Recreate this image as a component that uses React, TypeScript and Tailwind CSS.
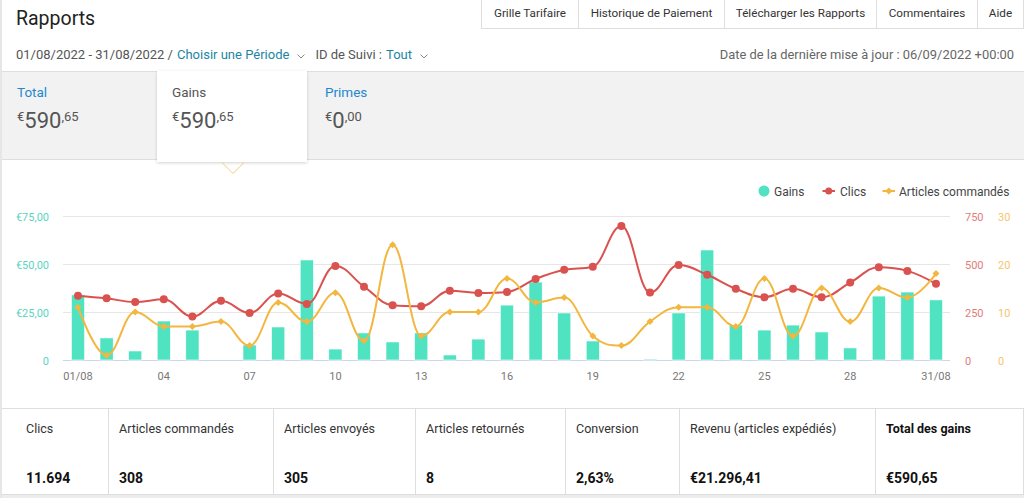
import React from 'react'

const X0 = 78
const STEP = 28.6
const BASE = 360

// per-day values, 1..31
const gains = [33.9, 11.5, 4.7, 20.3, 15.6, 0, 7.8, 17.2, 52.1, 5.7, 14.1, 9.4, 14.1, 2.6, 10.9, 28.6, 40.6, 24.5, 9.9, 0, 0.5, 24.5, 57.3, 18.2, 15.6, 18.2, 14.6, 6.3, 33.3, 35.4, 31.3]
const clics = [335, 321, 302, 316, 226, 309, 245, 347, 292, 490, 382, 285, 280, 361, 349, 354, 422, 470, 486, 698, 351, 495, 444, 371, 327, 371, 327, 403, 483, 464, 397]
const articles = [11, 1, 10, 7, 7, 8, 3, 12, 8, 14, 4, 24, 5, 10, 10, 17, 12, 13, 5, 3, 8, 11, 11, 7, 17, 5, 15, 8, 15, 13, 18]

const BAR = '#50e3c2'
const RED = '#d9524f'
const YEL = '#f3b63f'

type P = { x: number; y: number }

// highcharts-style spline
function spline(pts: P[]) {
  const s = 1.5
  const d = 2.5
  const ctl = pts.map((p, i) => {
    const prev = pts[i - 1]
    const next = pts[i + 1]
    if (!prev || !next) return null
    let lx = (s * p.x + prev.x) / d
    let ly = (s * p.y + prev.y) / d
    const rx = (s * p.x + next.x) / d
    let ry = (s * p.y + next.y) / d
    const corr = ((ry - ly) * (rx - p.x)) / (rx - lx) + p.y - ry
    ly += corr
    ry += corr
    if (ly > prev.y && ly > p.y) {
      ly = Math.max(prev.y, p.y)
      ry = 2 * p.y - ly
    } else if (ly < prev.y && ly < p.y) {
      ly = Math.min(prev.y, p.y)
      ry = 2 * p.y - ly
    }
    if (ry > next.y && ry > p.y) {
      ry = Math.max(next.y, p.y)
      ly = 2 * p.y - ry
    } else if (ry < next.y && ry < p.y) {
      ry = Math.min(next.y, p.y)
      ly = 2 * p.y - ry
    }
    return { lx, ly, rx, ry }
  })
  let out = `M${pts[0].x},${pts[0].y}`
  for (let i = 1; i < pts.length; i++) {
    const a = ctl[i - 1]
    const b = ctl[i]
    const q = pts[i - 1]
    const p = pts[i]
    out += ` C${a ? a.rx : q.x},${a ? a.ry : q.y} ${b ? b.lx : p.x},${b ? b.ly : p.y} ${p.x},${p.y}`
  }
  return out
}

const dx = (i: number) => X0 + i * STEP

function Chart() {
  const redPts = clics.map((v, i) => ({ x: dx(i), y: BASE - v * 0.192 }))
  const yelPts = articles.map((v, i) => ({ x: dx(i), y: BASE - v * 4.8 }))
  const grid = [216.5, 264.5, 312.5]
  const xLabels = ['01/08', '', '', '04', '', '', '07', '', '', '10', '', '', '13', '', '', '16', '', '', '19', '', '', '22', '', '', '25', '', '', '28', '', '', '31/08']
  return (
    <svg width={1022} height={245} viewBox="2 160 1022 245" className="block">
      {/* legend */}
      <g fontSize={12} fill="#444">
        <circle cx={764} cy={191} r={5.5} fill={BAR} />
        <text x={774} y={195.5}>Gains</text>
        <line x1={822.5} y1={191} x2={835} y2={191} stroke={RED} strokeWidth={2} />
        <circle cx={828.7} cy={191} r={3.5} fill={RED} />
        <text x={840} y={195.5}>Clics</text>
        <line x1={882.5} y1={191} x2={895} y2={191} stroke={YEL} strokeWidth={2} />
        <path d="M888.8,187.5 L892.3,191 L888.8,194.5 L885.3,191 Z" fill={YEL} />
        <text x={899} y={195.5}>Articles commandés</text>
      </g>

      {grid.map((y) => (
        <line key={y} x1={63} y1={y} x2={950} y2={y} stroke="#e6e6e6" strokeWidth={1} />
      ))}
      <line x1={63} y1={360.5} x2={950} y2={360.5} stroke="#ccd6eb" strokeWidth={1} />

      <g fontSize={11} fill="#5ad5bf" textAnchor="end">
        <text x={49} y={221}>€75,00</text>
        <text x={49} y={269}>€50,00</text>
        <text x={49} y={317}>€25,00</text>
        <text x={49} y={365}>0</text>
      </g>
      <g fontSize={11} fill="#e27b78">
        <text x={965} y={221}>750</text>
        <text x={965} y={269}>500</text>
        <text x={965} y={317}>250</text>
        <text x={965} y={365}>0</text>
      </g>
      <g fontSize={11} fill="#f5c56b">
        <text x={998} y={221}>30</text>
        <text x={998} y={269}>20</text>
        <text x={998} y={317}>10</text>
        <text x={998} y={365}>0</text>
      </g>
      <g fontSize={11} fill="#777" textAnchor="middle">
        {xLabels.map((l, i) => (l ? <text key={i} x={dx(i)} y={380}>{l}</text> : null))}
      </g>

      {gains.map((g, i) =>
        g > 0 ? (
          <rect key={i} x={dx(i) - 6.6} y={BASE - g * 1.92} width={13.2} height={g * 1.92} fill={BAR} stroke="#fff" strokeWidth={0.6} />
        ) : null,
      )}

      <path d={spline(redPts)} fill="none" stroke={RED} strokeWidth={2} />
      <path d={spline(yelPts)} fill="none" stroke={YEL} strokeWidth={2} />
      {redPts.map((p, i) => (
        <circle key={i} cx={p.x} cy={p.y} r={4} fill={RED} />
      ))}
      {yelPts.map((p, i) => (
        <path key={i} d={`M${p.x},${p.y - 3.5} L${p.x + 3.5},${p.y} L${p.x},${p.y + 3.5} L${p.x - 3.5},${p.y} Z`} fill={YEL} />
      ))}
    </svg>
  )
}

function Chevron() {
  return (
    <svg width="8" height="5" viewBox="0 0 8 5" className="mx-[8px] mt-[3px]">
      <path d="M0.5 0.5 L4 4 L7.5 0.5" fill="none" stroke="#888" strokeWidth="1" />
    </svg>
  )
}

function Amount({ whole, cents }: { whole: string; cents: string }) {
  return (
    <div className="mt-[6px] flex items-start text-[#555]">
      <span className="mt-[2px] text-[13px] leading-[14px]">€</span>
      <span className="text-[22px] leading-[26px]">{whole}</span>
      <span className="mt-[2px] text-[13px] leading-[14px]">,{cents}</span>
    </div>
  )
}

const tabs: [string, string][] = [
  ['Grille Tarifaire', 'w-[97px]'],
  ['Historique de Paiement', 'w-[146px]'],
  ['Télécharger les Rapports', 'w-[152px]'],
  ['Commentaires', 'w-[101px]'],
  ['Aide', 'w-[46px]'],
]

const stats: [string, string, string][] = [
  ['Clics', '11.694', 'w-[107px] pl-[24px]'],
  ['Articles commandés', '308', 'w-[165px] pl-[10px]'],
  ['Articles envoyés', '305', 'w-[142px] pl-[10px]'],
  ['Articles retournés', '8', 'w-[150px] pl-[10px]'],
  ['Conversion', '2,63%', 'w-[114px] pl-[10px]'],
  ['Revenu (articles expédiés)', '€21.296,41', 'w-[196px] pl-[10px]'],
]

export default function App() {
  return (
    <div className="h-[498px] w-[1024px] overflow-hidden border-l-2 border-[#e6e6e6] bg-white font-['Roboto',sans-serif]">
      <div className="flex h-[38px] items-start justify-between">
        <h1 className="pl-[14px] pt-[7px] text-[19.5px] leading-[24px] text-[#222]">Rapports</h1>
        <div className="flex h-[29px] border-b border-l border-[#dedede]">
          {tabs.map(([t, w]) => (
            <div key={t} className={`${w} flex items-center justify-center border-r border-[#dedede] text-[11.7px] text-[#333]`}>
              {t}
            </div>
          ))}
        </div>
      </div>

      <div className="flex h-[33px] items-center pl-[14px] pr-[10px] text-[13px] text-[#555]">
        <span>01/08/2022 - 31/08/2022 / </span>
        <span className="ml-[4px] text-[#1b86a4]">Choisir une Période</span>
        <Chevron />
        <span className="ml-[2px]">ID de Suivi :</span>
        <span className="ml-[4px] text-[#1b86a4]">Tout</span>
        <Chevron />
        <span className="ml-auto text-[12.9px] text-[#666]">Date de la dernière mise à jour : 06/09/2022 +00:00</span>
      </div>

      <div className="flex h-[89px] border-y border-[#dedede] bg-[#f2f2f2]">
        <div className="w-[155px] pl-[15px] pt-[10px]">
          <div className="text-[13.5px] leading-[20px] text-[#1f88d0]">Total</div>
          <Amount whole="590" cents="65" />
        </div>
        <div className="relative z-10 -mt-px h-[91px] w-[150px] bg-white pl-[15px] pt-[11px] shadow-[0_1px_3px_rgba(0,0,0,0.18)]">
          <div className="text-[13.5px] leading-[20px] text-[#555]">Gains</div>
          <Amount whole="590" cents="65" />
          <svg width="24" height="13" viewBox="0 0 24 13" className="absolute left-[64px] top-[91px]">
            <path d="M1 0.5 L12 11.5 L23 0.5" fill="none" stroke="#f6c97a" strokeWidth="1" />
          </svg>
        </div>
        <div className="pl-[18px] pt-[10px]">
          <div className="text-[13.5px] leading-[20px] text-[#1f88d0]">Primes</div>
          <Amount whole="0" cents="00" />
        </div>
      </div>

      <Chart />

      <div className="mt-[3px] flex h-[87px] border border-l-0 border-[#dedede]">
        {stats.map(([l, v, c]) => (
          <div key={l} className={`${c} flex flex-col justify-between border-r border-[#dedede] pb-[6px] pt-[11px]`}>
            <div className="text-[12.5px] leading-[18px] text-[#333]">{l}</div>
            <div className="text-[14px] font-bold leading-[20px] text-[#111]">{v}</div>
          </div>
        ))}
        <div className="flex flex-1 flex-col justify-between pb-[6px] pl-[10px] pt-[11px]">
          <div className="text-[12.5px] font-bold leading-[18px] text-[#111]">Total des gains</div>
          <div className="text-[14px] font-bold leading-[20px] text-[#111]">€590,65</div>
        </div>
      </div>
      <div className="h-[10px] bg-[#ececec]" />
    </div>
  )
}
